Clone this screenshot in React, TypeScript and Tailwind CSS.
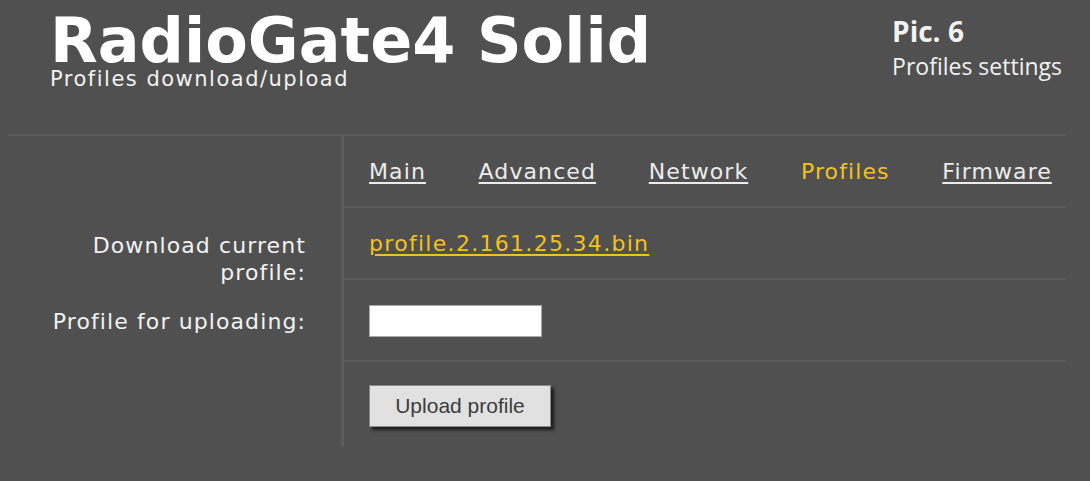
import React from 'react';

const tabs = [
  { label: 'Main', active: false },
  { label: 'Advanced', active: false },
  { label: 'Network', active: false },
  { label: 'Profiles', active: true },
  { label: 'Firmware', active: false },
];

const App: React.FC = () => {
  return (
    <div className="min-h-screen bg-[#505050] pl-2 pr-[25px] font-['DejaVu_Sans',sans-serif] text-[#f2f2f2]">
      {/* page header */}
      <header className="flex h-[134px] justify-between pl-[42px] pr-[3px]">
        <div className="pt-[12px]">
          <h1 className="text-[62px] font-bold leading-[57px] text-white">RadioGate4 Solid</h1>
          <p className="text-[21px] leading-[20px] tracking-[1.5px]">Profiles download/upload</p>
        </div>
        <div className="pt-[14px] font-['Open_Sans',sans-serif]">
          <div className="text-[28px] font-bold leading-[34px]">Pic. 6</div>
          <div className="mt-[3px] text-[23px] leading-[30px]">Profiles settings</div>
        </div>
      </header>

      <div className="border-t-2 border-[#5d5d5d] text-[22px] tracking-[1.1px]">
        {/* tabs */}
        <div className="flex h-[72px]">
          <div className="w-[333px]" />
          <nav className="flex flex-1 items-center justify-between border-b-2 border-l-[3px] border-[#5d5d5d] pl-[25px] pr-[13px]">
            {tabs.map((t) => (
              <a
                key={t.label}
                href="#"
                className={t.active ? 'text-[#f4c21b]' : 'text-[#ececec] underline underline-offset-[3px]'}
              >
                {t.label}
              </a>
            ))}
          </nav>
        </div>

        {/* download */}
        <div className="flex h-[72px]">
          <div className="w-[333px] pr-[35px] pt-[24px] text-right leading-[27px]">
            Download current
            <br />
            profile:
          </div>
          <div className="flex flex-1 items-center border-b-2 border-l-[3px] border-[#5d5d5d] pl-[25px]">
            <a href="#" className="tracking-[1.3px] text-[#f4c21b] underline underline-offset-[3px]">
              profile.2.161.25.34.bin
            </a>
          </div>
        </div>

        {/* upload */}
        <div className="flex h-[82px]">
          <div className="flex w-[333px] items-center justify-end pr-[35px]">Profile for uploading:</div>
          <div className="flex flex-1 items-center border-b-2 border-l-[3px] border-[#5d5d5d] pl-[25px]">
            <div className="mt-[2px] h-[32px] w-[173px] border border-[#a8a8a8] bg-white" />
          </div>
        </div>

        <div className="flex h-[84px]">
          <div className="w-[333px]" />
          <div className="flex flex-1 items-center border-l-[3px] border-[#5d5d5d] pl-[25px]">
            <button className="mt-[4px] h-[42px] w-[182px] border border-[#8a8a8a] bg-[#e1e1e1] font-['Liberation_Sans',Arial,sans-serif] text-[21px] tracking-normal text-[#3c3c3c] shadow-[3px_3px_3px_#1c1c1c]">
              Upload profile
            </button>
          </div>
        </div>
      </div>
    </div>
  );
};

export default App;
